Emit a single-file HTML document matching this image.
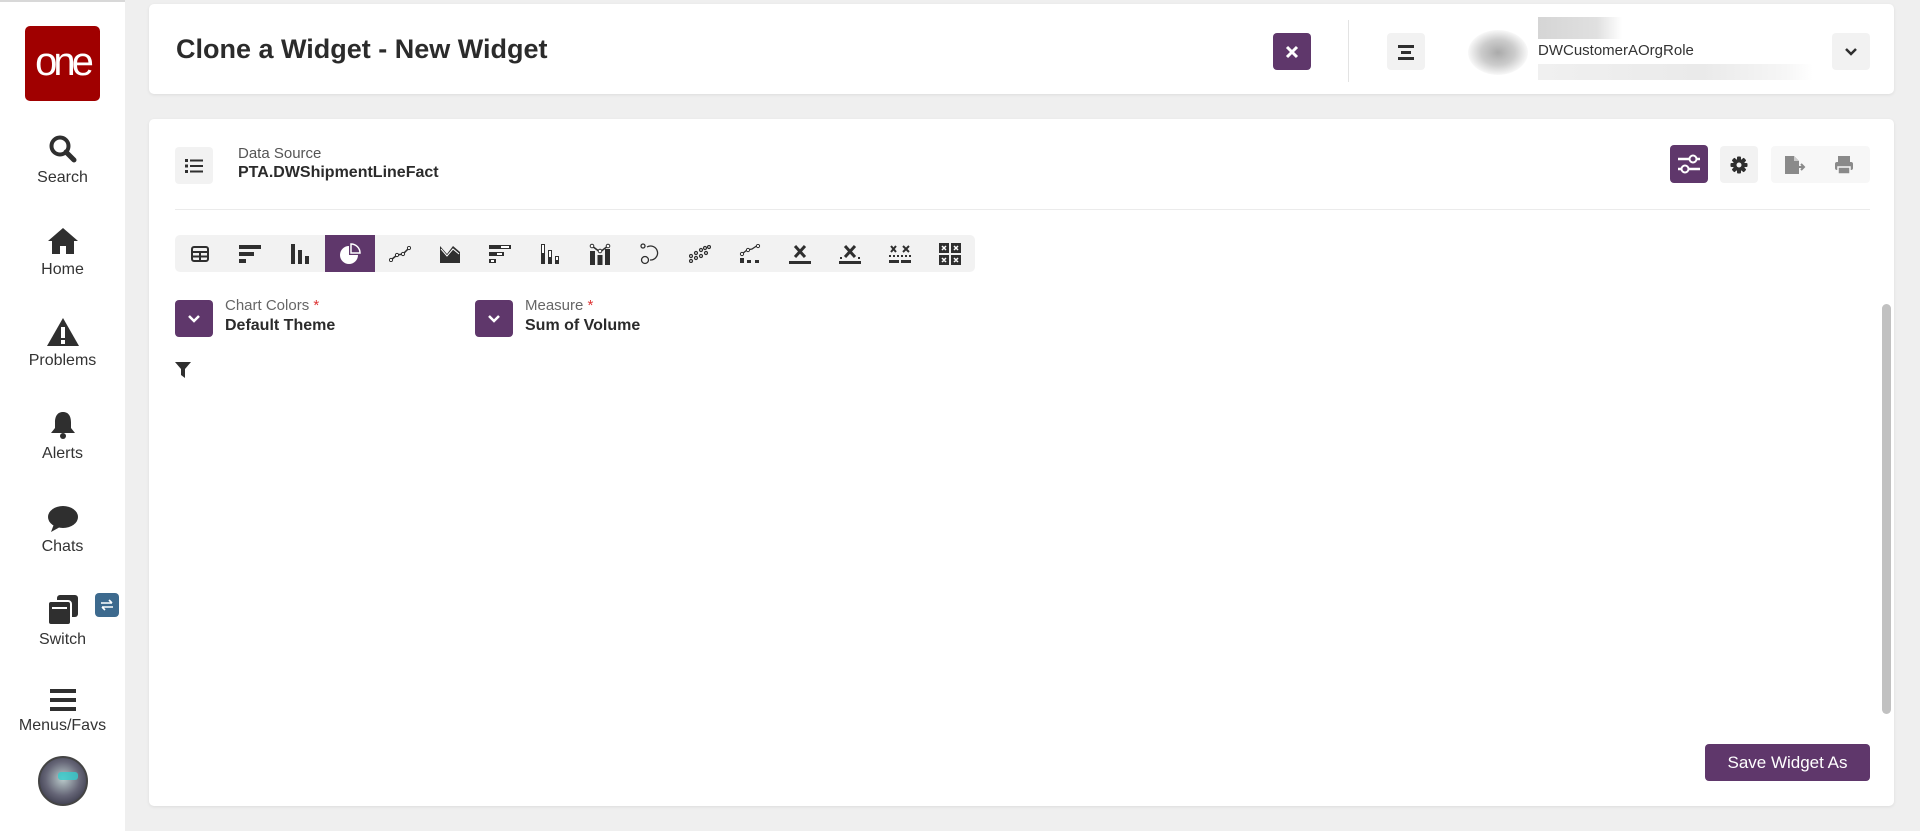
<!DOCTYPE html>
<html><head><meta charset="utf-8">
<style>
*{box-sizing:border-box;margin:0;padding:0}
body{width:1920px;height:831px;overflow:hidden;background:#efefef;font-family:"Liberation Sans",sans-serif;color:#2b2b2b;position:relative}
.abs{position:absolute}
.side{left:0;top:0;width:125px;height:831px;background:#fff;border-top:2px solid #d8d8d8}
.logo{left:25px;top:26px;width:75px;height:75px;background:#a00000;border-radius:5px;color:#fff;font-size:40px;text-align:center;line-height:72px;letter-spacing:-4px;font-weight:300}
.nav{left:0;width:125px;text-align:center;font-size:16px;color:#333}
.nav svg{display:block;margin:0 auto 5px}
.card{background:#fff;border-radius:5px;box-shadow:0 1px 3px rgba(0,0,0,.08)}
.btn{border-radius:4px;display:flex;align-items:center;justify-content:center}
.pur{background:#5f376b}
.gr{background:#f2f2f2}
.tb{left:175px;top:235px;width:800px;height:37px;background:#f2f2f2;border-radius:5px;display:flex}
.tb div{width:50px;height:37px;display:flex;align-items:center;justify-content:center}
.tb .on{background:#5f376b}
</style></head><body>
<div class="abs side"></div>
<div class="abs logo">one</div>

<div class="abs nav" style="top:134px">
<svg width="30" height="30" viewBox="0 0 30 30"><circle cx="12" cy="12" r="8.5" fill="none" stroke="#2f2f2f" stroke-width="4"/><path d="M18 18l8 8" stroke="#2f2f2f" stroke-width="5" stroke-linecap="round"/></svg>Search</div>
<div class="abs nav" style="top:226px">
<svg width="32" height="30" viewBox="0 0 32 30"><path d="M16 2L1 15h4v13h8v-8h6v8h8V15h4z" fill="#2f2f2f"/></svg>Home</div>
<div class="abs nav" style="top:317px">
<svg width="34" height="30" viewBox="0 0 34 30"><path d="M17 1L1 29h32z" fill="#2f2f2f"/><rect x="15" y="10" width="4" height="11" fill="#fff"/><rect x="15" y="23" width="4" height="4" fill="#fff"/></svg>Problems</div>
<div class="abs nav" style="top:410px">
<svg width="28" height="30" viewBox="0 0 28 30"><path d="M14 2c-6 0-8 5-8 10v6l-4 5h24l-4-5v-6c0-5-2-10-8-10z" fill="#2f2f2f"/><circle cx="14" cy="26" r="3" fill="#2f2f2f"/></svg>Alerts</div>
<div class="abs nav" style="top:505px">
<svg width="32" height="28" viewBox="0 0 32 28"><ellipse cx="16" cy="12" rx="15" ry="11" fill="#2f2f2f"/><path d="M4 27l3-8 6 3z" fill="#2f2f2f"/></svg>Chats</div>
<div class="abs nav" style="top:594px">
<svg width="32" height="32" viewBox="0 0 32 32"><rect x="10" y="1" width="21" height="22" rx="3" fill="#2f2f2f"/><rect x="1" y="7" width="23" height="24" rx="3" fill="#2f2f2f" stroke="#fff" stroke-width="2"/><rect x="5" y="13" width="15" height="2" fill="#fff"/></svg>Switch</div>
<div class="abs btn" style="left:95px;top:593px;width:24px;height:24px;background:#3d6a8e;border-radius:4px"><svg width="14" height="12" viewBox="0 0 14 12"><path d="M1 4h11M9 1l3 3M13 8H2M5 11L2 8" stroke="#fff" stroke-width="1.6" fill="none"/></svg></div>
<div class="abs nav" style="top:688px">
<svg width="28" height="24" viewBox="0 0 28 24"><rect x="1" y="1" width="26" height="4" fill="#2f2f2f"/><rect x="1" y="10" width="26" height="4" fill="#2f2f2f"/><rect x="1" y="19" width="26" height="4" fill="#2f2f2f"/></svg>Menus/Favs</div>
<div class="abs" style="left:38px;top:756px;width:50px;height:50px;border-radius:50%;background:radial-gradient(circle at 50% 45%,#bcc 0,#667 50%,#223 100%);border:2px solid #444"></div>
<div class="abs" style="left:58px;top:772px;width:20px;height:8px;background:#3cc;border-radius:3px;opacity:.8"></div>

<!-- header -->
<div class="abs card" style="left:149px;top:4px;width:1745px;height:90px"></div>
<div class="abs" style="left:176px;top:34px;font-size:27px;font-weight:bold;color:#2b2b2b">Clone a Widget - New Widget</div>
<div class="abs btn pur" style="left:1273px;top:33px;width:38px;height:37px"><svg width="14" height="14" viewBox="0 0 14 14"><path d="M2 2l10 10M12 2L2 12" stroke="#fff" stroke-width="3"/></svg></div>
<div class="abs" style="left:1348px;top:20px;width:1px;height:62px;background:#e3e3e3"></div>
<div class="abs btn gr" style="left:1387px;top:33px;width:38px;height:37px"><svg width="16" height="16" viewBox="0 0 16 16"><rect x="0" y="1" width="16" height="3" fill="#2f2f2f"/><rect x="3" y="7" width="10" height="3" fill="#2f2f2f"/><rect x="0" y="13" width="16" height="3" fill="#2f2f2f"/></svg></div>
<div class="abs" style="left:1468px;top:30px;width:60px;height:45px;border-radius:50%;background:radial-gradient(ellipse,#aaa 0,#ccc 40%,#fff 75%)"></div>
<div class="abs" style="left:1538px;top:17px;width:84px;height:22px;background:linear-gradient(90deg,#d5d5d5,#e0e0e0 70%,#fff)"></div>
<div class="abs" style="left:1538px;top:42px;font-size:15px;color:#333">DWCustomerAOrgRole</div>
<div class="abs" style="left:1538px;top:64px;width:275px;height:16px;background:linear-gradient(90deg,#f0f0f0,#eaeaea 60%,#f6f6f6 90%,#fff)"></div>
<div class="abs btn gr" style="left:1832px;top:33px;width:38px;height:37px"><svg width="12" height="8" viewBox="0 0 12 8"><path d="M1 1l5 5 5-5" stroke="#2f2f2f" stroke-width="2.5" fill="none"/></svg></div>

<!-- main card -->
<div class="abs card" style="left:149px;top:119px;width:1745px;height:687px"></div>
<div class="abs btn gr" style="left:175px;top:147px;width:38px;height:37px"><svg width="18" height="14" viewBox="0 0 18 14"><g fill="#2f2f2f"><rect x="0" y="0" width="3" height="3"/><rect x="5" y="0.5" width="13" height="2"/><rect x="0" y="5.5" width="3" height="3"/><rect x="5" y="6" width="13" height="2"/><rect x="0" y="11" width="3" height="3"/><rect x="5" y="11.5" width="13" height="2"/></g></svg></div>
<div class="abs" style="left:238px;top:145px;font-size:15px;color:#555">Data Source</div>
<div class="abs" style="left:238px;top:164px;font-size:16px;font-weight:bold;color:#2b2b2b">PTA.DWShipmentLineFact</div>

<div class="abs btn pur" style="left:1670px;top:145px;width:38px;height:38px"><svg width="24" height="20" viewBox="0 0 24 20"><path d="M1 5h22M1 15h22" stroke="#fff" stroke-width="2.5"/><circle cx="16" cy="5" r="3.5" fill="#5f376b" stroke="#fff" stroke-width="2"/><circle cx="8" cy="15" r="3.5" fill="#5f376b" stroke="#fff" stroke-width="2"/></svg></div>
<div class="abs btn gr" style="left:1720px;top:146px;width:38px;height:37px"><svg width="18" height="18" viewBox="0 0 18 18"><g fill="#2f2f2f"><circle cx="9" cy="9" r="6"/><rect x="7" y="0.5" width="4" height="17" rx="1"/><rect x="0.5" y="7" width="17" height="4" rx="1"/><rect x="7" y="0.5" width="4" height="17" rx="1" transform="rotate(45 9 9)"/><rect x="7" y="0.5" width="4" height="17" rx="1" transform="rotate(-45 9 9)"/></g><circle cx="9" cy="9" r="2.5" fill="#f2f2f2"/></svg></div>
<div class="abs" style="left:1771px;top:146px;width:99px;height:37px;background:#f7f7f7;border-radius:4px"></div>
<div class="abs" style="left:1784px;top:155px"><svg width="22" height="20" viewBox="0 0 22 20"><path d="M1 1h9l5 5v13H1z" fill="#8a8a8a"/><path d="M13 12h7M17 9l3 3-3 3" stroke="#8a8a8a" stroke-width="2" fill="none"/><path d="M10 1v5h5" fill="#ccc"/></svg></div>
<div class="abs" style="left:1834px;top:155px"><svg width="20" height="20" viewBox="0 0 20 20"><rect x="4" y="1" width="12" height="6" fill="#8a8a8a"/><rect x="1" y="7" width="18" height="8" rx="2" fill="#8a8a8a"/><rect x="4" y="12" width="12" height="7" fill="#8a8a8a" stroke="#f7f7f7" stroke-width="1.5"/></svg></div>

<div class="abs" style="left:175px;top:209px;width:1695px;height:1px;background:#ebebeb"></div>

<div class="abs tb">
<div><svg width="18" height="16" viewBox="0 0 18 16"><rect x="1" y="1" width="16" height="14" rx="2" fill="none" stroke="#2f2f2f" stroke-width="2"/><path d="M1 6h16M9 6v9M1 10.5h16" stroke="#2f2f2f" stroke-width="2"/></svg></div>
<div><svg width="22" height="20" viewBox="0 0 22 20"><rect x="0" y="1" width="22" height="4" fill="#2f2f2f"/><rect x="0" y="8" width="15" height="4" fill="#2f2f2f"/><rect x="0" y="15" width="7" height="4" fill="#2f2f2f"/></svg></div>
<div><svg width="20" height="20" viewBox="0 0 20 20"><rect x="1" y="0" width="4" height="20" fill="#2f2f2f"/><rect x="8" y="6" width="4" height="14" fill="#2f2f2f"/><rect x="15" y="12" width="4" height="8" fill="#2f2f2f"/></svg></div>
<div class="on"><svg width="22" height="22" viewBox="0 0 22 22"><path d="M10 3A9 9 0 1 0 19 12H10z" fill="#fff"/><path d="M12 1v9h9A9 9 0 0 0 12 1z" fill="none" stroke="#fff" stroke-width="1.5"/></svg></div>
<div><svg width="22" height="16" viewBox="0 0 22 16"><path d="M2 14L8 9l6-1 6-6" stroke="#2f2f2f" stroke-width="1.5" fill="none"/><circle cx="2" cy="14" r="1.6" fill="#fff" stroke="#2f2f2f"/><circle cx="8" cy="9" r="1.6" fill="#fff" stroke="#2f2f2f"/><circle cx="14" cy="8" r="1.6" fill="#fff" stroke="#2f2f2f"/><circle cx="20" cy="2" r="1.6" fill="#fff" stroke="#2f2f2f"/></svg></div>
<div><svg width="22" height="20" viewBox="0 0 22 20"><path d="M1 2l7 8 6-8 7 6v11H1z" fill="#2f2f2f"/><path d="M2 5l6 7 6-7 6 5" stroke="#fff" stroke-width="1" fill="none"/></svg></div>
<div><svg width="22" height="20" viewBox="0 0 22 20"><rect x="0" y="1" width="22" height="4" fill="#2f2f2f"/><rect x="12" y="2" width="8" height="2" fill="#fff"/><rect x="0" y="8" width="15" height="4" fill="#2f2f2f"/><rect x="8" y="9" width="5" height="2" fill="#fff"/><rect x="0" y="15" width="7" height="4" fill="#2f2f2f"/><rect x="2" y="16" width="3" height="2" fill="#fff"/></svg></div>
<div><svg width="20" height="20" viewBox="0 0 20 20"><rect x="1" y="0" width="4" height="20" fill="#2f2f2f"/><rect x="2" y="1" width="2" height="8" fill="#fff"/><rect x="8" y="6" width="4" height="14" fill="#2f2f2f"/><rect x="9" y="7" width="2" height="6" fill="#fff"/><rect x="15" y="12" width="4" height="8" fill="#2f2f2f"/><rect x="16" y="13" width="2" height="3" fill="#fff"/></svg></div>
<div><svg width="22" height="22" viewBox="0 0 22 22"><rect x="1" y="8" width="5" height="14" fill="#2f2f2f"/><rect x="8.5" y="12" width="5" height="10" fill="#2f2f2f"/><rect x="16" y="6" width="5" height="16" fill="#2f2f2f"/><path d="M3 3l8 6 8-6" stroke="#2f2f2f" stroke-width="1.5" fill="none"/><circle cx="3" cy="3" r="1.8" fill="#fff" stroke="#2f2f2f"/><circle cx="11" cy="8" r="1.8" fill="#fff" stroke="#2f2f2f"/><circle cx="19" cy="3" r="1.8" fill="#fff" stroke="#2f2f2f"/></svg></div>
<div><svg width="22" height="22" viewBox="0 0 22 22"><circle cx="4" cy="3" r="2" fill="none" stroke="#2f2f2f" stroke-width="1.3"/><circle cx="6" cy="17" r="3.5" fill="none" stroke="#2f2f2f" stroke-width="1.3"/><path d="M8 4a7 7 0 1 1 3 13" fill="none" stroke="#2f2f2f" stroke-width="1.3"/></svg></div>
<div><svg width="22" height="18" viewBox="0 0 22 18" fill="none" stroke="#2f2f2f" stroke-width="1.2"><circle cx="2" cy="16" r="1.5"/><circle cx="2" cy="11" r="1.5"/><circle cx="7" cy="13" r="1.5"/><circle cx="7" cy="8" r="1.5"/><circle cx="12" cy="11" r="1.5"/><circle cx="12" cy="5" r="1.5"/><circle cx="17" cy="8" r="1.5"/><circle cx="20" cy="2" r="1.5"/><circle cx="16" cy="3" r="1.5"/></svg></div>
<div><svg width="22" height="20" viewBox="0 0 22 20"><rect x="1" y="14" width="4" height="5" fill="#2f2f2f"/><rect x="8" y="16" width="4" height="3" fill="#2f2f2f"/><rect x="16" y="16" width="4" height="3" fill="#2f2f2f"/><path d="M3 10l5-4 5-1 6-4" stroke="#2f2f2f" stroke-width="1.3" fill="none"/><circle cx="3" cy="10" r="1.6" fill="#fff" stroke="#2f2f2f"/><circle cx="9" cy="6" r="1.6" fill="#fff" stroke="#2f2f2f"/><circle cx="19" cy="2" r="1.6" fill="#fff" stroke="#2f2f2f"/></svg></div>
<div><svg width="22" height="20" viewBox="0 0 22 20"><path d="M6 2l10 11M16 2L6 13" stroke="#2f2f2f" stroke-width="3"/><rect x="0" y="17" width="22" height="3" fill="#2f2f2f"/></svg></div>
<div><svg width="22" height="20" viewBox="0 0 22 20"><path d="M6 2l10 11M16 2L6 13" stroke="#2f2f2f" stroke-width="3"/><rect x="0" y="17" width="22" height="3" fill="#2f2f2f"/><rect x="1" y="13" width="2" height="2" fill="#2f2f2f"/><rect x="19" y="13" width="2" height="2" fill="#2f2f2f"/></svg></div>
<div><svg width="22" height="20" viewBox="0 0 22 20"><path d="M2 2l5 6M7 2L2 8M14 2l6 6M20 2l-6 6" stroke="#2f2f2f" stroke-width="2"/><g fill="#2f2f2f"><rect x="0" y="11" width="2" height="2"/><rect x="4" y="11" width="2" height="2"/><rect x="8" y="11" width="2" height="2"/><rect x="12" y="11" width="2" height="2"/><rect x="16" y="11" width="2" height="2"/><rect x="20" y="11" width="2" height="2"/><rect x="0" y="16" width="10" height="3"/><rect x="12" y="16" width="10" height="3"/></g></svg></div>
<div><svg width="22" height="22" viewBox="0 0 22 22"><g fill="#2f2f2f"><rect x="0" y="0" width="10" height="10"/><rect x="12" y="0" width="10" height="10"/><rect x="0" y="12" width="10" height="10"/><rect x="12" y="12" width="10" height="10"/></g><path d="M3 3l4 4M7 3L3 7M15 3l4 4M19 3l-4 4M3 15l4 4M7 15l-4 4M15 15l4 4M19 15l-4 4" stroke="#fff" stroke-width="1.5"/></svg></div>
</div>

<div class="abs btn pur" style="left:175px;top:300px;width:38px;height:37px"><svg width="12" height="8" viewBox="0 0 12 8"><path d="M1 1l5 5 5-5" stroke="#fff" stroke-width="2.5" fill="none"/></svg></div>
<div class="abs" style="left:225px;top:297px;font-size:15px;color:#666">Chart Colors <span style="color:#d33">*</span></div>
<div class="abs" style="left:225px;top:317px;font-size:16px;font-weight:bold">Default Theme</div>
<div class="abs btn pur" style="left:475px;top:300px;width:38px;height:37px"><svg width="12" height="8" viewBox="0 0 12 8"><path d="M1 1l5 5 5-5" stroke="#fff" stroke-width="2.5" fill="none"/></svg></div>
<div class="abs" style="left:525px;top:297px;font-size:15px;color:#666">Measure <span style="color:#d33">*</span></div>
<div class="abs" style="left:525px;top:317px;font-size:16px;font-weight:bold">Sum of Volume</div>
<div class="abs" style="left:175px;top:362px"><svg width="16" height="16" viewBox="0 0 16 16"><path d="M0 0h16L10 7v9L6 13V7z" fill="#2f2f2f"/></svg></div>

<div class="abs" style="left:1882px;top:304px;width:9px;height:410px;background:#c1c1c1;border-radius:5px"></div>
<div class="abs btn pur" style="left:1705px;top:744px;width:165px;height:37px;color:#fff;font-size:17px">Save Widget As</div>
</body></html>
